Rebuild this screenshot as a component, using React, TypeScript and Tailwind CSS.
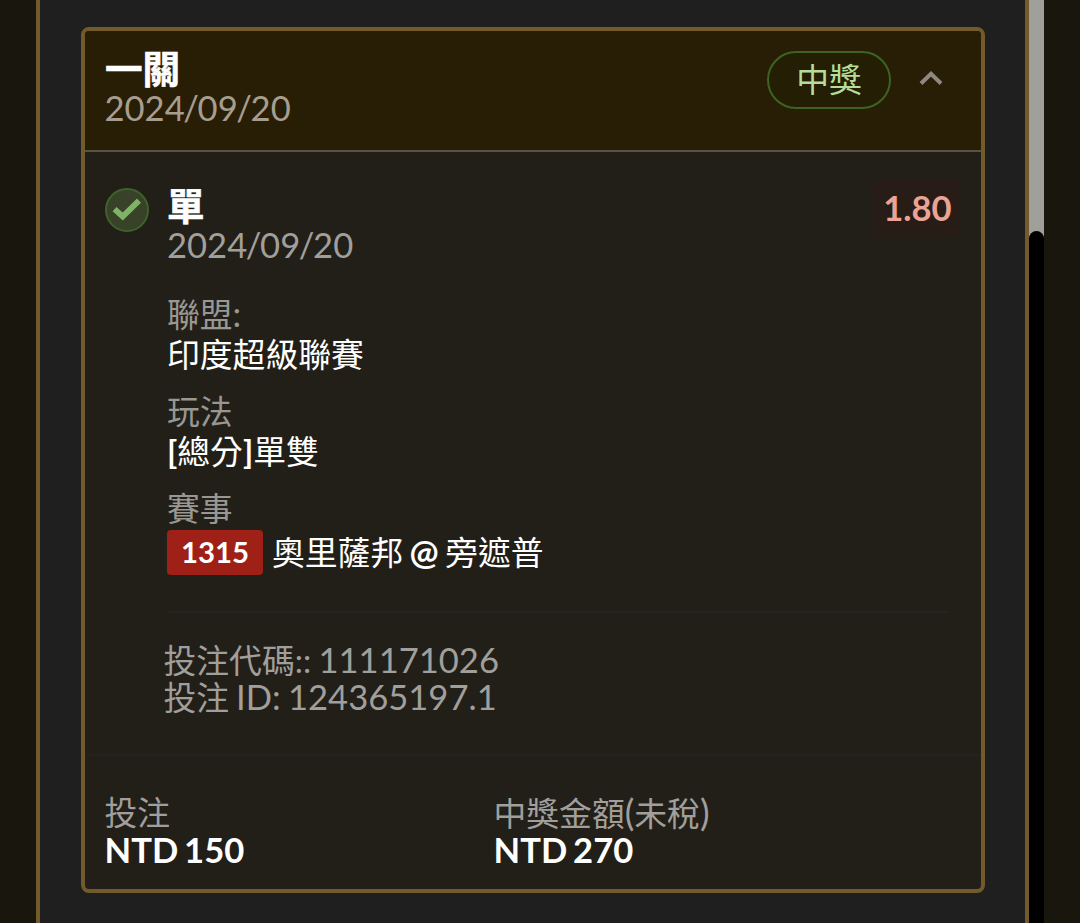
import type { ReactNode } from "react";

type FieldProps = {
  label: ReactNode;
  children: ReactNode;
};

// Latin glyphs run slightly larger than the CJK text around them
function Latin({ children }: { children: ReactNode }) {
  return <span className="text-[34.6px] leading-none">{children}</span>;
}

function SlipDate({ value }: { value: string }) {
  return (
    <>
      {value.split("/").map((part, index) => (
        <span key={index}>
          {index > 0 ? <span className="mx-[-1.4px]">/</span> : null}
          {part}
        </span>
      ))}
    </>
  );
}

function Field({ label, children }: FieldProps) {
  return (
    <div className="leading-[40px]">
      <div className="h-10 text-[#999792]">{label}</div>
      <div className="h-10 text-white">{children}</div>
    </div>
  );
}

type AmountProps = {
  label: ReactNode;
  value: string;
};

function Amount({ label, value }: AmountProps) {
  return (
    <div className="ml-[-0.5px] leading-[38px]">
      <p className="h-[37px] text-[#a19f9b]">{label}</p>
      <p className="text-[34.6px] font-bold text-white [word-spacing:-2.5px]">{value}</p>
    </div>
  );
}

function WinCheck() {
  return (
    <svg className="size-11 shrink-0" viewBox="0 0 44 44" fill="none">
      <circle cx="22" cy="22" r="21" fill="#384229" stroke="#3c6328" strokeWidth="2" />
      <path d="M9.5 21.2 L17.7 28.5 L34 12.7" stroke="#7fb365" strokeWidth="5.8" />
    </svg>
  );
}

function SlipHeader() {
  return (
    <header className="flex h-[121px] shrink-0 items-start border-b-2 border-[#575343] bg-[#281e05] pl-5 pr-9 pt-[19px]">
      <div className="leading-[38px]">
        <h1 className="h-[39px] text-[37.6px] font-bold text-white [-webkit-text-stroke:0.6px_white]">一關</h1>
        <p className="ml-[-0.5px] text-[34.6px] text-[#a79e8f]">
          <SlipDate value="2024/09/20" />
        </p>
      </div>
      <span className="ml-auto mt-px flex h-[58px] w-[124px] items-center justify-center rounded-full border-2 border-[#3c6324] bg-[#241f04] text-[#b3dd98]">
        中獎
      </span>
      <svg className="ml-[27px] mr-px mt-[19px] h-[18px] w-[26px]" viewBox="0 0 26 18" fill="none">
        <path d="M3 14.5 L13 4.7 L23 14.5" stroke="#8f8882" strokeWidth="4" />
      </svg>
    </header>
  );
}

function SlipBody() {
  return (
    <section className="flex h-[604px] shrink-0 items-start border-b-2 border-[#25221e] pl-5 pr-[22px] pt-[35px]">
      <div className="pt-[1.4px]">
        <WinCheck />
      </div>
      <div className="ml-[18px] flex-1">
        <div className="flex items-start justify-between">
          <div className="leading-[38px]">
            <h2 className="h-[39px] text-[37.6px] font-bold text-white [-webkit-text-stroke:0.6px_white]">單</h2>
            <p className="text-[34.6px] text-[#a19f9b]">
              <SlipDate value="2024/09/20" />
            </p>
          </div>
          <span className="mt-[-8px] flex h-[58px] w-[85px] items-center justify-center rounded bg-[#281c16] pl-[2px] text-[34.6px] font-bold text-[#eaa394]">
            1.80
          </span>
        </div>

        <div className="mt-[31px] flex flex-col gap-[17px]">
          <Field
            label={
              <>
                聯盟<Latin>:</Latin>
              </>
            }
          >
            印度超級聯賽
          </Field>
          <Field label="玩法">
            <span className="font-bold">[</span>總分<span className="font-bold">]</span>單雙
          </Field>
          <Field label="賽事">
            <div className="mt-[1px] flex h-[45px] items-center">
              <span className="mr-[9px] flex h-[45px] w-24 items-center justify-center rounded bg-[#9e2017] pb-[2px] text-[29.4px] font-bold">
                1315
              </span>
              <p className="[word-spacing:-2px]">
                奧里薩邦 <b className="text-[34.6px] leading-none">@</b> 旁遮普
              </p>
            </div>
          </Field>
        </div>

        <div className="mr-[10px] mt-[41px] border-t-2 border-[#26231f]" />

        <div className="ml-[-3.5px] mt-[29px] leading-[37px] text-[#a19f9b] [word-spacing:-1px]">
          <p className="h-[37px]">
            投注代碼:: <Latin>111171026</Latin>
          </p>
          <p className="h-[37px] [word-spacing:-1.5px]">
            投注 <Latin>ID: 124365197.1</Latin>
          </p>
        </div>
      </div>
    </section>
  );
}

export default function App() {
  return (
    <div className="flex h-[923px] w-[1080px] overflow-hidden bg-[#19160e] font-['Lato','Noto_Sans_CJK_TC',sans-serif] text-[32.8px]">
      <div className="w-9 shrink-0" />
      <main className="w-[993px] shrink-0 border-x-4 border-[#735a2b] bg-[#1f1f1f] pl-[41px] pt-[27px]">
        <article className="flex h-[866px] w-[904px] flex-col overflow-hidden rounded-lg border-4 border-[#735a2b] bg-[#221f19]">
          <SlipHeader />
          <SlipBody />
          <footer className="flex pl-5 pt-[38px]">
            <div className="w-[389px]">
              <Amount label="投注" value="NTD 150" />
            </div>
            <Amount
              label={
                <>
                  中獎金額<span className="text-[36px] leading-none">(</span>未稅
                  <span className="text-[36px] leading-none">)</span>
                </>
              }
              value="NTD 270"
            />
          </footer>
        </article>
      </main>
      {/* scroll track */}
      <div className="flex w-[15px] shrink-0 flex-col bg-[#a19f9a] pt-[231px]">
        <div className="flex-1 rounded-t-full bg-black" />
      </div>
    </div>
  );
}
